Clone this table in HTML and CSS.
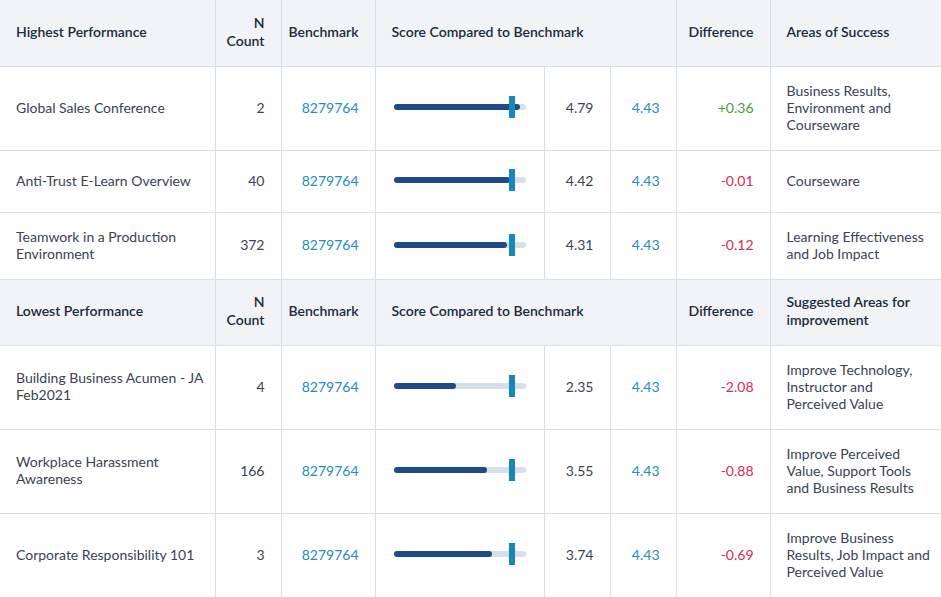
FILE: index.html
```html
<!DOCTYPE html>
<html>
<head>
<meta charset="utf-8">
<link rel="stylesheet" href="styles.css">
</head>
<body>
<table class="perf">
  <colgroup>
    <col class="c-name"><col class="c-n"><col class="c-bm"><col class="c-bar"><col class="c-score"><col class="c-bmv"><col class="c-diff"><col class="c-areas">
  </colgroup>
  <tbody>
    <tr class="head">
      <th>Highest Performance</th>
      <th class="r">N<br>Count</th>
      <th class="r">Benchmark</th>
      <th colspan="3">Score Compared to Benchmark</th>
      <th class="r">Difference</th>
      <th>Areas of Success</th>
    </tr>
    <tr class="h84">
      <td>Global Sales Conference</td>
      <td class="r">2</td>
      <td class="r link">8279764</td>
      <td><div class="bar"><div class="fill" style="width:95.8%"></div><div class="mark" style="left:88.6%"></div></div></td>
      <td class="r">4.79</td>
      <td class="r link">4.43</td>
      <td class="r pos">+0.36</td>
      <td>Business Results, Environment and Courseware</td>
    </tr>
    <tr class="h62">
      <td>Anti-Trust E-Learn Overview</td>
      <td class="r">40</td>
      <td class="r link">8279764</td>
      <td><div class="bar"><div class="fill" style="width:88.4%"></div><div class="mark" style="left:88.6%"></div></div></td>
      <td class="r">4.42</td>
      <td class="r link">4.43</td>
      <td class="r neg">-0.01</td>
      <td>Courseware</td>
    </tr>
    <tr class="h67">
      <td>Teamwork in a Production Environment</td>
      <td class="r">372</td>
      <td class="r link">8279764</td>
      <td><div class="bar"><div class="fill" style="width:86.2%"></div><div class="mark" style="left:88.6%"></div></div></td>
      <td class="r">4.31</td>
      <td class="r link">4.43</td>
      <td class="r neg">-0.12</td>
      <td>Learning Effectiveness and Job Impact</td>
    </tr>
    <tr class="head">
      <th>Lowest Performance</th>
      <th class="r">N<br>Count</th>
      <th class="r">Benchmark</th>
      <th colspan="3">Score Compared to Benchmark</th>
      <th class="r">Difference</th>
      <th>Suggested Areas for improvement</th>
    </tr>
    <tr class="h84">
      <td>Building Business Acumen - JA Feb2021</td>
      <td class="r">4</td>
      <td class="r link">8279764</td>
      <td><div class="bar"><div class="fill" style="width:47%"></div><div class="mark" style="left:88.6%"></div></div></td>
      <td class="r">2.35</td>
      <td class="r link">4.43</td>
      <td class="r neg">-2.08</td>
      <td>Improve Technology, Instructor and Perceived Value</td>
    </tr>
    <tr class="h84">
      <td>Workplace Harassment Awareness</td>
      <td class="r">166</td>
      <td class="r link">8279764</td>
      <td><div class="bar"><div class="fill" style="width:71%"></div><div class="mark" style="left:88.6%"></div></div></td>
      <td class="r">3.55</td>
      <td class="r link">4.43</td>
      <td class="r neg">-0.88</td>
      <td>Improve Perceived Value, Support Tools and Business Results</td>
    </tr>
    <tr class="h84">
      <td>Corporate Responsibility 101</td>
      <td class="r">3</td>
      <td class="r link">8279764</td>
      <td><div class="bar"><div class="fill" style="width:74.8%"></div><div class="mark" style="left:88.6%"></div></div></td>
      <td class="r">3.74</td>
      <td class="r link">4.43</td>
      <td class="r neg">-0.69</td>
      <td>Improve Business Results, Job Impact and Perceived Value</td>
    </tr>
  </tbody>
</table>
</body>
</html>
```

FILE: styles.css
```css
html, body {
  margin: 0;
  padding: 0;
  background: #ffffff;
}
body {
  font-family: Lato, "Open Sans", "Liberation Sans", sans-serif;
  color: #3b4252;
  font-size: 14px;
  line-height: 17px;
}
.perf {
  border-collapse: collapse;
  table-layout: fixed;
  width: 941px;
}
.c-name { width: 215px; }
.c-n { width: 66px; }
.c-bm { width: 94px; }
.c-bar { width: 169px; }
.c-score { width: 66px; }
.c-bmv { width: 66px; }
.c-diff { width: 94px; }
.c-areas { width: 171px; }

.perf td, .perf th {
  border: 1px solid #d6e0ea;
  padding: 0 6px 2px 16px;
  vertical-align: middle;
  text-align: left;
}
.perf tr:first-child th { border-top: none; }
.perf tr > :first-child { border-left: none; }

.perf .r {
  text-align: right;
  padding: 0 16px 2px 6px;
}

.head th {
  background: #f1f3f7;
  color: #202a3c;
  font-family: "Lato Semibold", Lato, sans-serif;
  font-weight: 600;
  font-size: 14px;
  line-height: 18px;
  height: 66px;
  box-sizing: border-box;
}

.h84 td { height: 81px; }
.h62 td { height: 59px; }
.h67 td { height: 64px; }

.link { color: #238cc2; }
.pos { color: #4f9a3a; }
.neg { color: #d42a5b; }

.bar {
  position: relative;
  width: 132px;
  height: 6px;
  margin-left: 2px;
  background: #d6e0ea;
  border-radius: 3px;
}
.fill {
  height: 6px;
  background: #1f4a85;
  border-radius: 3px;
}
.mark {
  position: absolute;
  top: -8px;
  width: 6px;
  height: 22px;
  margin-left: -1px;
  background: #1787bd;
}
```
